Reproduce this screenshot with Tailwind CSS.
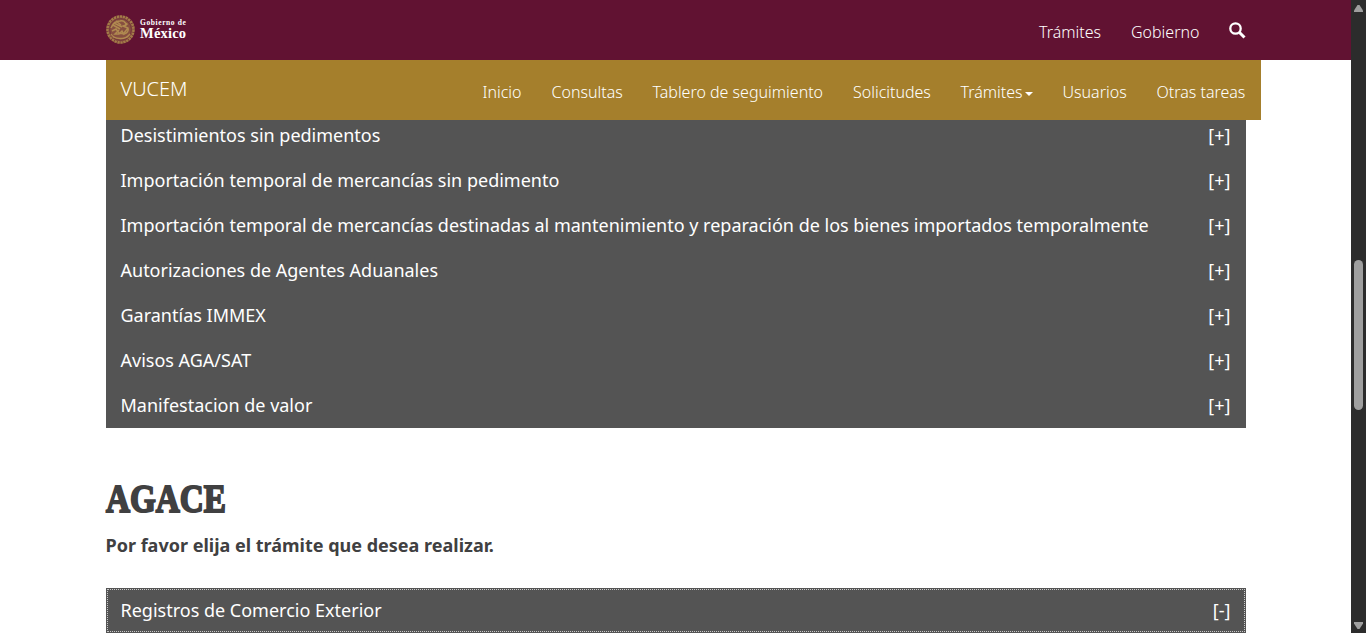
<!DOCTYPE html>
<html lang="es"><head><meta charset="utf-8"><title>VUCEM</title>
<script src="https://cdn.jsdelivr.net/npm/@tailwindcss/browser@4"></script></head>
<body class="flex h-[633px] overflow-hidden bg-white font-['Noto_Sans',sans-serif] text-white">
<div class="h-[633px] w-[1351px] shrink-0 overflow-hidden">
<header class="flex h-[60px] items-center justify-between bg-[#611232] pr-[105px] pl-[105px]">
<a class="flex items-center">
<svg class="-mt-[2px] h-[31px] w-[31px]" viewBox="0 0 31 31" fill="none" stroke="#b08a50">
<circle cx="15.5" cy="15.5" r="12" fill="#874f40" stroke="none"/>
<circle cx="15.5" cy="15.5" r="13" stroke-width="2.6" stroke="#a37c48" stroke-dasharray="2.5 .5"/>
<circle cx="15.5" cy="15.5" r="10.9" stroke-width=".8" stroke="#70303a"/>
<path d="M6 14c2-5 5-7 9-7 3-1 6 1 6 4l-3 1 5 2c1 3-1 5-4 6l-5-1-3-4-4 2M8 11l7 4M9 9l8 4M11 7l5 4M14 16l-4 4h4l3-3 2 4M19 8l3 2-2 2M23 14l-4 5" stroke-width="1.5"/>
<path d="M6 20c3 5 14 7 19 0M8 23c5 2 10 2 15 0" stroke-width="1.3"/>
</svg>
<span class="-mt-[2px] ml-[4px] flex flex-col font-['Liberation_Serif',serif] font-bold">
<span class="h-[8px] text-[7.500px] leading-[8px] tracking-[.6px]">Gobierno de</span>
<span class="h-[12px] text-[14.500px] leading-[12px] tracking-[.2px]">México</span></span>
</a>
<nav class="flex items-center pt-[4px] text-base font-light whitespace-nowrap">
<a class="w-[92px]">Trámites</a><a class="w-[98px]">Gobierno</a>
<svg class="-mt-[3px] h-[17px] w-[17px]" viewBox="0 0 17 17" fill="none" stroke="white"><circle cx="6.5" cy="6.5" r="5.2" stroke-width="2.3"/><path d="M10.5 10.5l5 5" stroke-width="3"/></svg>
</nav>
</header>
<nav class="relative z-10 ml-[106px] flex h-[60px] w-[1155px] items-center bg-[#a57f2c] pl-[14.5px] text-base font-light whitespace-nowrap">
<a class="w-[362px] pb-[3px] text-xl font-light">VUCEM</a>
<div class="flex pt-[4px]"><a class="w-[69px]">Inicio</a><a class="w-[101px]">Consultas</a><a class="w-[200.5px]">Tablero de seguimiento</a><a class="w-[107.5px]">Solicitudes</a><a class="flex w-[102px] items-center">Trámites<svg class="mt-[3px] ml-[2px] h-[4px] w-[8px]" viewBox="0 0 8 4"><path d="M0 0h8L4 4z" fill="white"/></svg></a><a class="w-[94px]">Usuarios</a><a>Otras tareas</a></div>
</nav>
<main class="-mt-[7px] ml-[106px] w-[1140px] text-[18px] whitespace-nowrap">
<div class="bg-[#545454] pr-[15.5px] pl-[14.5px] leading-[45px]">
<div class="flex h-[45px] justify-between"><span>Desistimientos sin pedimentos</span><span>[+]</span></div>
<div class="flex h-[45px] justify-between"><span>Importación temporal de mercancías sin pedimento</span><span>[+]</span></div>
<div class="flex h-[45px] justify-between"><span>Importación temporal de mercancías destinadas al mantenimiento y reparación de los bienes importados temporalmente</span><span>[+]</span></div>
<div class="flex h-[45px] justify-between"><span>Autorizaciones de Agentes Aduanales</span><span>[+]</span></div>
<div class="flex h-[45px] justify-between"><span>Garantías IMMEX</span><span>[+]</span></div>
<div class="flex h-[45px] justify-between"><span>Avisos AGA/SAT</span><span>[+]</span></div>
<div class="flex h-[45px] justify-between"><span>Manifestacion de valor</span><span>[+]</span></div>
</div>
<h1 class="mt-[50px] h-[40px] origin-left scale-x-[.83] font-['Liberation_Serif',serif] text-[40px] leading-[41px] font-bold text-[#404041] [-webkit-text-stroke:2px_#404041]">AGACE</h1>
<p class="mt-[15px] -ml-[.5px] h-[25px] text-[18px] leading-[25px] font-bold text-[#404041]">Por favor elija el trámite que desea realizar.</p>
<div class="mt-[30px] h-[45px] bg-[#545454] p-px"><div class="flex h-[43px] justify-between border border-dotted border-[#c8c8c8] pr-[13.5px] pl-[12.5px] leading-[41px]"><span>Registros de Comercio Exterior</span><span>[-]</span></div></div>
</main>
</div>
<aside class="flex h-[633px] w-[15px] shrink-0 flex-col items-center bg-[#2c2c2c]">
<svg class="mt-[5px] h-[7px] w-[9px]" viewBox="0 0 9 7"><path d="M3.5 0h2L9 5.5V7H0V5.5z" fill="#9f9f9f"/></svg>
<div class="mt-[248px] h-[150px] w-[9px] rounded-full bg-[#9f9f9f]"></div>
<svg class="mt-[212px] h-[7px] w-[9px]" viewBox="0 0 9 7"><path d="M3.5 7h2L9 1.500V0H0v1.500z" fill="#9f9f9f"/></svg>
</aside>
</body></html>
